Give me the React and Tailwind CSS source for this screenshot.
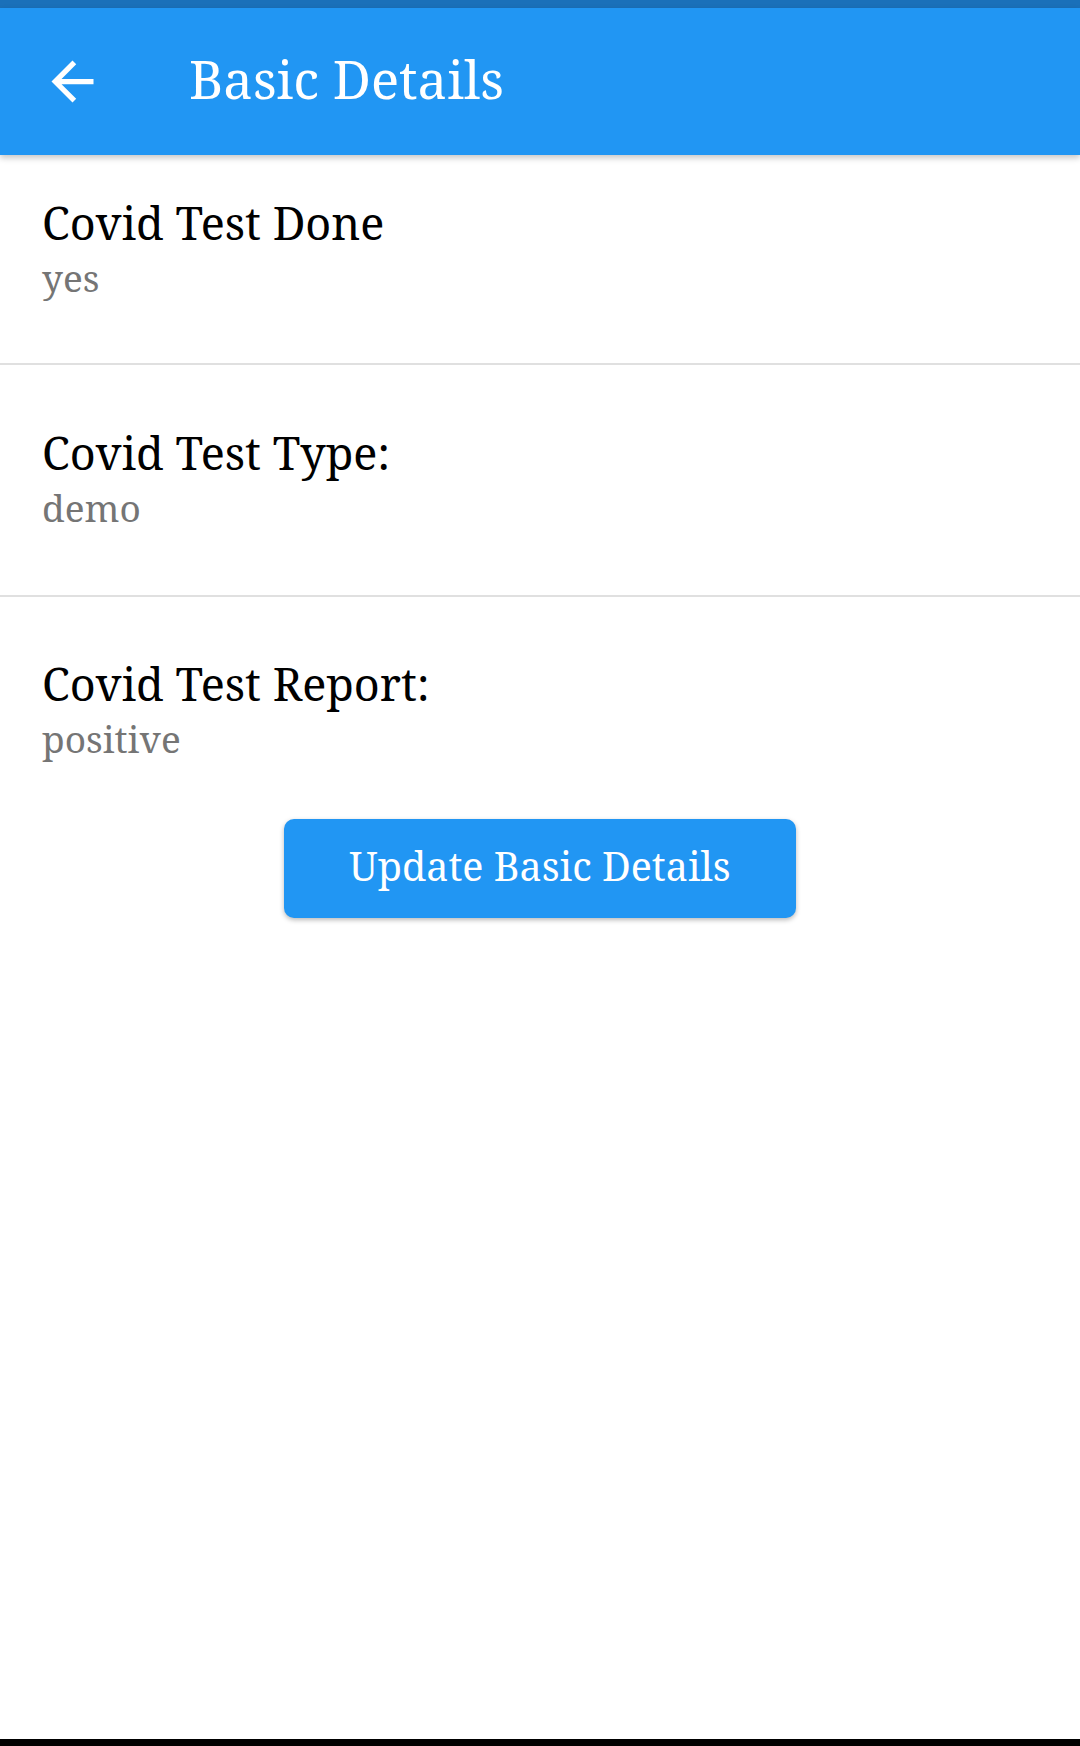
import React from 'react';

const serif = { fontFamily: '"Noto Serif", "DejaVu Serif", serif' };

const BackArrow = () => (
    <svg width="63" height="63" viewBox="0 0 24 24" fill="#ffffff">
        <path d="M20 11H7.83l5.59-5.59L12 4l-8 8 8 8 1.41-1.41L7.83 13H20v-2z" />
    </svg>
);

const DetailRow = ({ label, value, className }) => (
    <div className={`px-[42px] ${className}`}>
        <div className="text-[45px] leading-[54px] text-black">{label}</div>
        <div className="mt-[2px] text-[37px] leading-[52px] text-[#757575]">{value}</div>
    </div>
);

const App = () => {
    return (
        <div className="w-[1080px] h-[1746px] bg-white flex flex-col" style={serif}>
            {/* status strip */}
            <div className="h-[8px] bg-[#1a70b9]" />

            <header className="h-[147px] bg-[#2196f3] flex items-center pl-[41px] shadow-[0_3px_6px_rgba(0,0,0,0.22)] relative z-10">
                <BackArrow />
                <h1 className="ml-[85px] mb-[4px] text-[52.5px] leading-none text-white font-normal">Basic Details</h1>
            </header>

            <main className="flex-1 flex flex-col">
                <DetailRow label="Covid Test Done" value="yes" className="pt-[41px] pb-[59px]" />
                <div className="h-[2px] bg-[#e0e0e0]" />
                <DetailRow label="Covid Test Type:" value="demo" className="pt-[61px] pb-[61px]" />
                <div className="h-[2px] bg-[#e0e0e0]" />
                <DetailRow label="Covid Test Report:" value="positive" className="pt-[60px]" />

                <div className="flex justify-center mt-[54px]">
                    <button className="w-[512px] h-[99px] pb-[4px] rounded-[10px] bg-[#2196f3] text-white text-[39.5px] leading-none shadow-[0_2px_5px_rgba(0,0,0,0.28)]">
                        Update Basic Details
                    </button>
                </div>
            </main>

            {/* nav strip */}
            <div className="h-[7px] bg-black" />
        </div>
    );
};

export default App;
